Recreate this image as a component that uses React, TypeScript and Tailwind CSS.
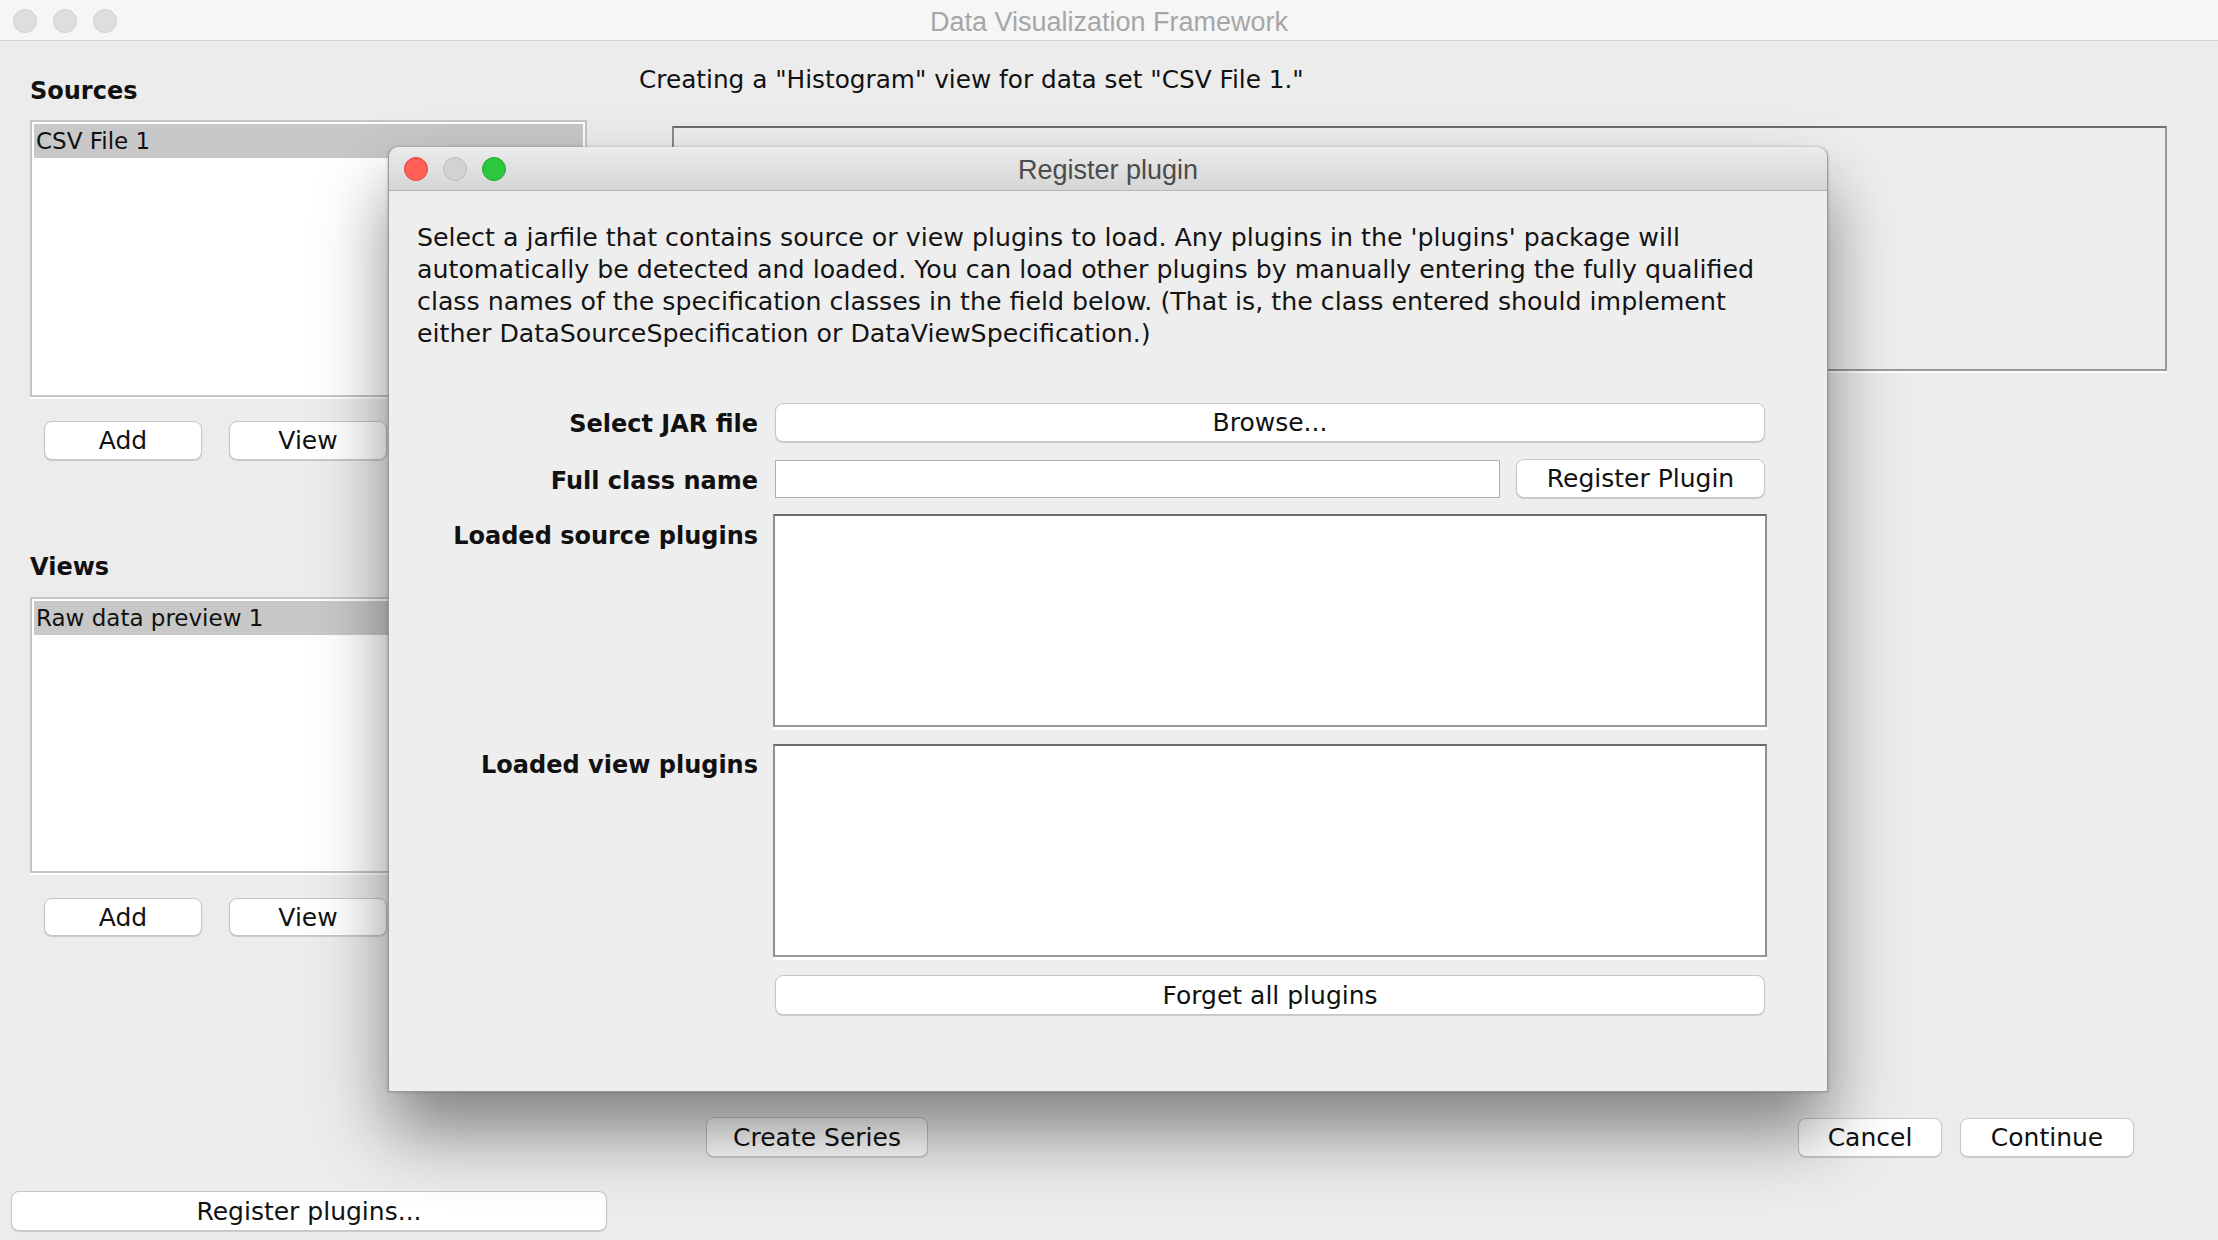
import React from "react";

function Btn({ children, className = "" }: { children: React.ReactNode; className?: string }) {
  return (
    <div
      className={
        "flex items-center justify-center rounded-[8px] border border-[#c6c6c6] bg-white text-[25px] leading-none text-[#111] shadow-[0_1px_1px_rgba(0,0,0,0.15)] " +
        className
      }
    >
      {children}
    </div>
  );
}

function Lights({ active }: { active?: boolean }) {
  if (!active) {
    return (
      <div className="flex gap-[16px] pl-[13px]">
        <div className="h-[24px] w-[24px] rounded-full border border-[#d0d0d0] bg-[#dedede]" />
        <div className="h-[24px] w-[24px] rounded-full border border-[#d0d0d0] bg-[#dedede]" />
        <div className="h-[24px] w-[24px] rounded-full border border-[#d0d0d0] bg-[#dedede]" />
      </div>
    );
  }
  return (
    <div className="flex gap-[15px] pl-[15px]">
      <div className="h-[24px] w-[24px] rounded-full border border-[#e0443e] bg-[#fe5f57]" />
      <div className="h-[24px] w-[24px] rounded-full border border-[#bdbdbd] bg-[#d2d2d2]" />
      <div className="h-[24px] w-[24px] rounded-full border border-[#24a732] bg-[#2bc73f]" />
    </div>
  );
}

function SideList({ item, className = "" }: { item: string; className?: string }) {
  return (
    <div className={"border-2 border-[#c5c5c5] bg-white p-[2px] shadow-[0_2px_0_#ffffff] " + className}>
      <div className="h-[34px] bg-[#c8c8c8] pl-[2px] text-[23px] leading-[34px] text-[#111]">{item}</div>
    </div>
  );
}

function PluginList({ className = "" }: { className?: string }) {
  return (
    <div
      className={
        "border-2 border-x-[#8e8e8e] border-b-[#979797] border-t-[#6a6a6a] bg-white shadow-[0_3px_0_#ffffff] " + className
      }
    />
  );
}

export default function App() {
  return (
    <div className="relative flex h-[1240px] w-[2218px] flex-col overflow-hidden bg-[#ececec] font-['DejaVu_Sans',sans-serif] text-[#111]">
      {/* main window title bar */}
      <div className="grid h-[41px] shrink-0 grid-cols-[1fr_auto_1fr] items-center border-b border-[#d3d3d3] bg-[#f6f6f6]">
        <Lights />
        <div className="pt-[2px] font-['Liberation_Sans',sans-serif] text-[27px] text-[#a6a6a6]">Data Visualization Framework</div>
        <div />
      </div>

      <div className="flex h-[1150px] shrink-0">
        {/* left column */}
        <div className="ml-[30px] flex w-[557px] shrink-0 flex-col">
          <div className="mt-[34px] h-[32px] text-[24px] font-bold leading-[32px]">Sources</div>
          <SideList item="CSV File 1" className="mt-[13px] h-[277px]" />
          <div className="mt-[24px] flex gap-[27px] pl-[14px]">
            <Btn className="h-[39px] w-[158px]">Add</Btn>
            <Btn className="h-[39px] w-[158px]">View</Btn>
          </div>
          <div className="mt-[91px] h-[32px] text-[24px] font-bold leading-[32px]">Views</div>
          <SideList item="Raw data preview 1" className="mt-[14px] h-[276px]" />
          <div className="mt-[25px] flex gap-[27px] pl-[14px]">
            <Btn className="h-[38px] w-[158px]">Add</Btn>
            <Btn className="h-[38px] w-[158px]">View</Btn>
          </div>
        </div>

        {/* right column */}
        <div className="ml-[52px] flex flex-1 flex-col">
          <div className="mt-[23px] h-[32px] text-[24.75px] leading-[32px]">
            Creating a "Histogram" view for data set "CSV File 1."
          </div>
          <div className="ml-[33px] mr-[51px] mt-[30px] h-[245px] border-2 border-b-[#9a9a9a] border-l-[#8a8a8a] border-r-[#9a9a9a] border-t-[#6e6e6e] bg-[#eeeeee] shadow-[0_2px_0_#ffffff]" />
          <div className="mb-[34px] mt-auto flex items-center">
            <Btn className="ml-[67px] h-[40px] w-[222px]">Create Series</Btn>
            <Btn className="ml-auto h-[39px] w-[144px]">Cancel</Btn>
            <Btn className="ml-[18px] mr-[84px] h-[39px] w-[174px]">Continue</Btn>
          </div>
        </div>
      </div>

      <div className="pl-[11px]">
        <Btn className="h-[40px] w-[596px]">Register plugins...</Btn>
      </div>

      {/* modal dialog */}
      <div className="absolute left-[388px] top-[147px] flex h-[945px] w-[1440px] flex-col rounded-t-[10px] border border-t-0 border-[#9a9a9a] bg-[#eeeeee] shadow-[0_40px_70px_rgba(0,0,0,0.45),0_0_3px_rgba(0,0,0,0.25)]">
        <div className="grid h-[44px] shrink-0 grid-cols-[1fr_auto_1fr] items-center rounded-t-[10px] border-b border-[#b7b7b7] bg-gradient-to-b from-[#ececec] to-[#d5d5d5]">
          <Lights active />
          <div className="pt-[3px] font-['Liberation_Sans',sans-serif] text-[27px] text-[#4c4c4c]">Register plugin</div>
          <div />
        </div>

        <div className="flex flex-col pl-[28px] pt-[31px]">
          <div className="whitespace-nowrap text-[25.25px] leading-[32px] text-[#141414]">
            <div>Select a jarfile that contains source or view plugins to load. Any plugins in the 'plugins' package will</div>
            <div>automatically be detected and loaded. You can load other plugins by manually entering the fully qualified</div>
            <div>class names of the specification classes in the field below. (That is, the class entered should implement</div>
            <div>either DataSourceSpecification or DataViewSpecification.)</div>
          </div>

          <div className="mt-[53px] flex h-[39px] items-center">
            <div className="w-[341px] pt-[2px] text-right text-[24px] font-bold">Select JAR file</div>
            <Btn className="ml-[17px] h-[39px] w-[990px]">Browse...</Btn>
          </div>

          <div className="mt-[17px] flex h-[39px] items-center">
            <div className="w-[341px] pt-[5px] text-right text-[24px] font-bold">Full class name</div>
            <div className="ml-[17px] h-[38px] w-[725px] border border-[#b0b0b0] bg-white" />
            <Btn className="ml-[16px] h-[39px] w-[249px]">Register Plugin</Btn>
          </div>

          <div className="mt-[16px] flex items-start">
            <div className="w-[341px] pt-[6px] text-right text-[24px] font-bold leading-[32px]">Loaded source plugins</div>
            <PluginList className="ml-[15px] h-[213px] w-[994px]" />
          </div>

          <div className="mt-[17px] flex items-start">
            <div className="w-[341px] pt-[5px] text-right text-[24px] font-bold leading-[32px]">Loaded view plugins</div>
            <PluginList className="ml-[15px] h-[213px] w-[994px]" />
          </div>

          <div className="mt-[18px] flex">
            <Btn className="ml-[358px] h-[40px] w-[990px]">Forget all plugins</Btn>
          </div>
        </div>
      </div>
    </div>
  );
}
